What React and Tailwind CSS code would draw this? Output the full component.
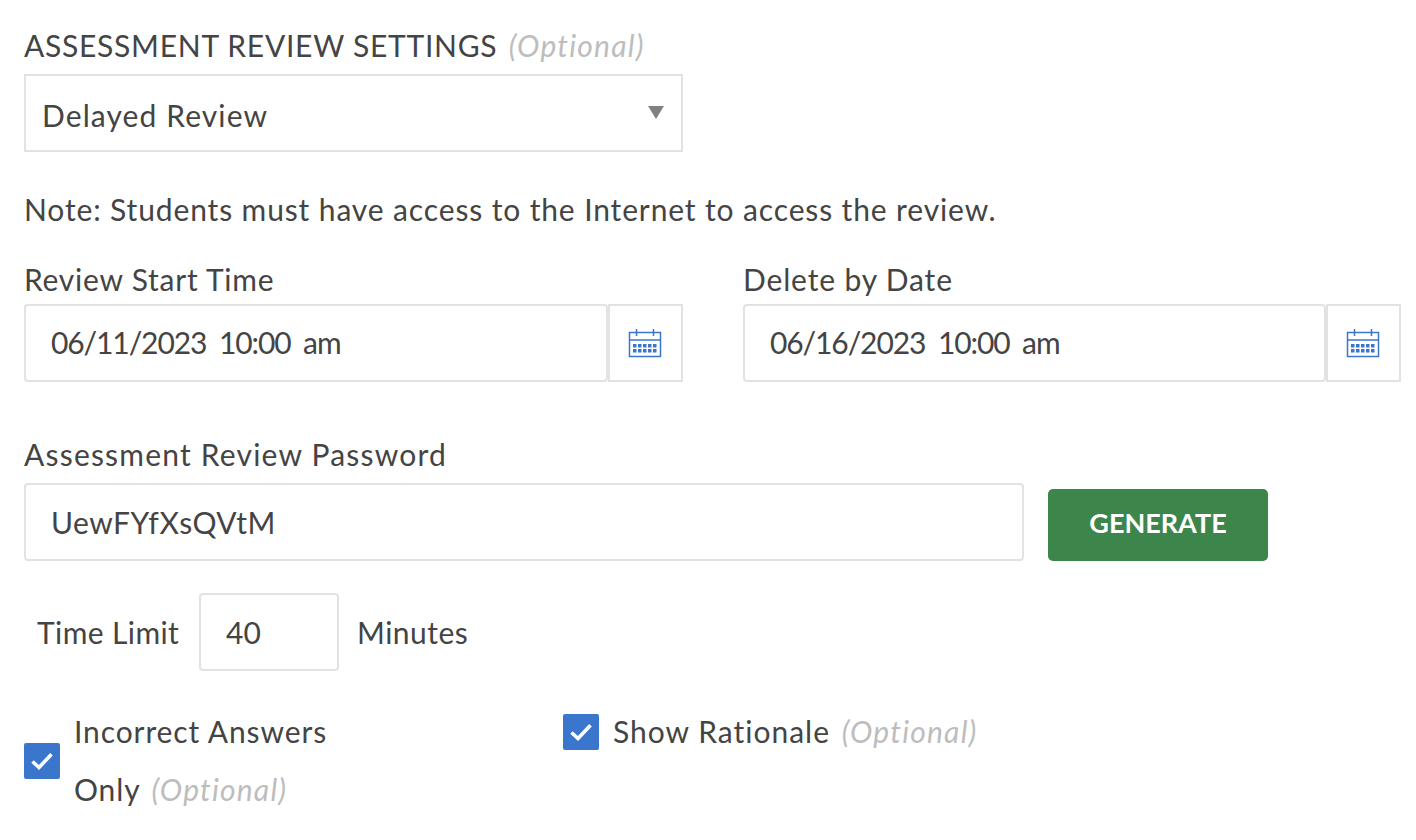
import React from "react";

const font = "font-['Lato','Open_Sans',sans-serif]";

function CalendarIcon() {
  return (
    <svg width="34" height="30" viewBox="0 0 34 30" fill="none" className="mr-[2px]">
      <rect x="1.5" y="4.5" width="31" height="24" stroke="#3a76cc" strokeWidth="1.5" fill="#fff" />
      <path d="M1.5 12h31" stroke="#3a76cc" strokeWidth="1.5" />
      <path d="M8.5 1v7M25.5 1v7" stroke="#3a76cc" strokeWidth="1.5" />
      <g fill="#3a76cc">
        {[5, 10, 15, 20, 25].map((x) => (
          <React.Fragment key={x}>
            <rect x={x} y="16" width="3.5" height="3.5" />
            <rect x={x} y="21" width="3.5" height="3.5" />
          </React.Fragment>
        ))}
      </g>
    </svg>
  );
}

function Checkbox({ className = "" }) {
  return (
    <span className={`flex h-9 w-9 shrink-0 items-center justify-center rounded-[2px] bg-[#3a76cc] ${className}`}>
      <svg width="22" height="18" viewBox="0 0 22 18" fill="none">
        <path d="M1.5 9.5l6.5 6L20.5 2.2" stroke="#fff" strokeWidth="3.6" />
      </svg>
    </span>
  );
}

function Optional() {
  return <em className="ml-[3px] italic tracking-[1.2px] text-[#bdbdbd]">(Optional)</em>;
}

function DateField({ label, labelTracking, value, width }) {
  return (
    <div className={width}>
      <div className={`h-[24px] leading-[24px] ${labelTracking}`}>{label}</div>
      <div className="mt-[13px] flex h-[78px]">
        <div className="flex flex-1 items-center rounded-[4px] border-2 border-[#e2e2e2] pl-[25px] tracking-[-1.1px] [word-spacing:6px]">
          <span className="mb-[2px]">{value}</span>
        </div>
        <div className="flex w-[75px] items-center justify-center border-2 border-[#e2e2e2]">
          <CalendarIcon />
        </div>
      </div>
    </div>
  );
}

export default function App() {
  return (
    <div className={`${font} h-[840px] w-[1416px] overflow-hidden bg-white pl-6 pt-[29px] text-[30px] leading-[32px] text-[#444444]`}>
      <div className="h-[33px] tracking-[0.73px]">
        ASSESSMENT REVIEW SETTINGS <Optional />
      </div>
      <div className="mt-3 flex h-[78px] w-[659px] items-center justify-between border-2 border-[#e2e2e2] pl-4 pr-[17px]">
        <span className="mt-[3px] tracking-[1.1px]">Delayed Review</span>
        <svg width="16" height="14" viewBox="0 0 16 14">
          <path d="M0 0h16L8 13z" fill="#808080" />
        </svg>
      </div>
      <div className="mt-[41px] h-[32px] tracking-[0.87px]">Note: Students must have access to the Internet to access the review.</div>
      <div className="mt-[42px] flex gap-[60px]">
        <DateField label="Review Start Time" labelTracking="tracking-[0.76px]" value="06/11/2023 10:00 am" width="w-[659px]" />
        <DateField label="Delete by Date" labelTracking="tracking-[0.85px]" value="06/16/2023 10:00 am" width="w-[658px]" />
      </div>
      <div className="mt-[60px] h-[24px] leading-[24px] tracking-[1.2px]">Assessment Review Password</div>
      <div className="mt-[17px] flex items-end gap-6">
        <div className="flex h-[78px] w-[1000px] items-center rounded-[4px] border-2 border-[#e2e2e2] pl-[25px] tracking-[0.5px]">UewFYfXsQVtM</div>
        <button className="flex h-[72px] w-[220px] items-center justify-center rounded-[5px] bg-[#3d864b] text-[27px] font-bold text-white">
          <span className="mb-[5px]">GENERATE</span>
        </button>
      </div>
      <div className="mt-8 flex items-center pl-[13px]">
        <span className="w-[162px] tracking-[0.4px]">Time Limit</span>
        <div className="flex h-[78px] w-[140px] items-center rounded-[4px] border-2 border-[#e2e2e2] pl-[25px]">40</div>
        <span className="ml-[18px] tracking-[0.5px]">Minutes</span>
      </div>
      <div className="mt-[29px] flex items-start">
        <div className="flex w-[539px] items-start gap-[14px]">
          <Checkbox className="mt-[43px]" />
          <div className="mt-[2px] w-[270px] leading-[58px] tracking-[0.9px]">
            <div>Incorrect Answers</div>
            <div>
              Only <Optional />
            </div>
          </div>
        </div>
        <div className="mt-[14px] flex items-center gap-[14px]">
          <Checkbox />
          <span className="mb-[2px] tracking-[1px]">
            Show Rationale <Optional />
          </span>
        </div>
      </div>
    </div>
  );
}
